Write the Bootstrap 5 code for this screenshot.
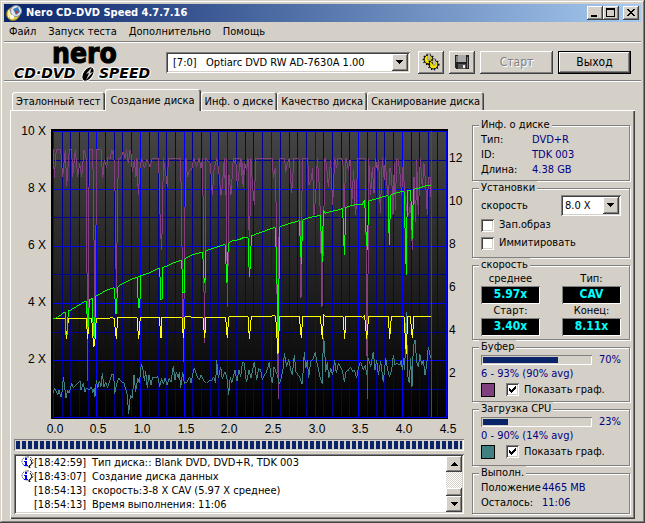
<!DOCTYPE html>
<html lang="ru">
<head>
<meta charset="utf-8">
<meta name="viewport" content="width=device-width, initial-scale=1">
<title>Nero CD-DVD Speed 4.7.7.16</title>
<link href="https://cdn.jsdelivr.net/npm/bootstrap@5.3.0/dist/css/bootstrap.min.css" rel="stylesheet">
<style>
:root{--face:#d4d0c8;--shade:#808080;--dark:#404040;--navy:#0a246a}
body{font:11px/14px "DejaVu Sans Condensed","DejaVu Sans",sans-serif;color:#000;background:var(--face)}
.window{min-height:100vh;padding:4px;background:var(--face);box-shadow:inset -1px -1px var(--dark),inset 1px 1px var(--face),inset -2px -2px var(--shade),inset 2px 2px #fff}
.titlebar{height:18px;padding:0 2px;background:linear-gradient(90deg,#0a246a,#a6caf0);color:#fff}
.caption{font-weight:700;line-height:18px}
.raised{background:var(--face);border:0;border-radius:0;color:#000;box-shadow:inset -1px -1px var(--dark),inset 1px 1px #fff,inset -2px -2px var(--shade)}
.sunken{border:0;border-radius:0;box-shadow:inset 1px 1px var(--shade),inset -1px -1px #fff,inset 2px 2px var(--dark),inset -2px -2px var(--face)}
.thin-well{box-shadow:inset 1px 1px var(--shade),inset -1px -1px #fff}
.capbtn{width:16px;height:14px;padding:0}
.capbtn svg,.toolbtn svg{display:block;margin:auto}
.menubar{height:20px;padding:0 5px;gap:12px;border-bottom:1px solid var(--shade);box-shadow:0 1px #fff}
.menubar a{color:#000;text-decoration:none;line-height:20px}
.toolbar{height:39px;padding:2px 10px 0 9px;gap:5px;border-bottom:1px solid var(--shade);box-shadow:0 1px #fff}
.logo{width:146px;height:37px;flex:none;overflow:visible}
.pick{appearance:none;height:21px;padding:0 20px 0 7px;color:#000;font-size:11px;line-height:15px;background:#fff url("data:image/svg+xml,%3Csvg xmlns='http://www.w3.org/2000/svg' width='18' height='17' shape-rendering='crispEdges'%3E%3Cpath fill='%23404040' d='M0 0h16v17H0z'/%3E%3Cpath fill='%23fff' d='M0 0h15v16H0z'/%3E%3Cpath fill='%23808080' d='M1 1h14v15H1z'/%3E%3Cpath fill='%23d4d0c8' d='M1 1h13v14H1z'/%3E%3Cpath d='M4 6h7v1H4zM5 7h5v1H5zM6 8h3v1H6zM7 9h1v1H7z'/%3E%3C/svg%3E") no-repeat right center}
.drive{margin:0 3px 0 2px}
.speed{width:60px;padding-left:4px}
.toolbtn{width:26px;height:23px;padding:0;flex:none}
.wide{width:73px;height:23px;padding:0;flex:none;font-size:12px}
.wide:disabled{color:var(--shade);text-shadow:1px 1px #fff;opacity:1}
.primary-frame{border:1px solid #000}
.sheet{margin:8px 6px 0}
.nav-tabs{border:0;padding-left:2px}
.nav-tabs .nav-link{border:0;border-radius:3px 3px 0 0;margin:0;padding:2px 4px 1px;height:18px;line-height:15px;white-space:nowrap;color:#000;background:var(--face);box-shadow:inset 1px 1px #fff,inset -1px 0 var(--dark),inset -2px 0 var(--shade)}
.nav-tabs .nav-link:hover{color:#000}
.nav-tabs .nav-link.active{color:#000;height:22px;margin-bottom:-1px;padding:3px 6px;background:var(--face);position:relative}
.panel{padding:8px 5px 4px 4px;gap:8px;box-shadow:inset 1px 1px #fff,inset -1px -1px var(--dark),inset -2px -2px var(--shade)}
.chart{display:block;width:100%;height:auto}
.steps{height:12px;padding:2px;border-radius:0;background:var(--face)}
.steps .progress-bar{background:repeating-linear-gradient(90deg,var(--navy) 0 4px,var(--face) 4px 6px)}
.log{margin-top:3px;padding:2px;background:#fff}
.log li{height:14px;white-space:nowrap;padding-left:4px}
.log li svg{width:14px;height:13px;flex:none}
.log time{width:58px;flex:none}
.track{width:16px;background:repeating-conic-gradient(#fff 0 25%,var(--face) 0 50%) 0 0/2px 2px}
.arrow{width:16px;height:16px;padding:0}
.arrow svg{display:block;margin:auto}
.thumb{height:8px}
.side{width:158px;flex:none}
.group{min-width:0;padding:0 8px 3px;border:1px solid var(--shade);box-shadow:1px 1px #fff,inset 1px 1px #fff}
.group legend{float:none;width:auto;margin:0 0 0 -2px;padding:0 2px;font-size:11px;line-height:14px;background:var(--face)}
.roomy{padding-bottom:5px}
.fact dt,.fact dd{margin:0;font-weight:400;line-height:15px}
.fact dt{width:51px}
.fact.wider dt{width:61px}
.navytext,.fact dd{color:#000080}
.tick{appearance:none;width:13px;height:13px;margin:0 5px 0 0;background:#fff;flex:none}
.tick:checked{background:#fff url("data:image/svg+xml,%3Csvg xmlns='http://www.w3.org/2000/svg' width='13' height='13' shape-rendering='crispEdges'%3E%3Cpath d='M3 5h1v3H3zM4 6h1v3H4zM5 7h1v3H5zM6 6h1v3H6zM7 5h1v3H7zM8 4h1v3H8zM9 3h1v3H9z'/%3E%3C/svg%3E")}
.opt{height:18px}
.readout{display:block;width:59px;height:18px;line-height:16px;background:#000;color:#0ff;font-size:12px;font-weight:700;text-align:center}
.meter{width:111px;height:10px;padding:2px;border-radius:0;background:var(--face)}
.meter .progress-bar{background:var(--navy)}
.line12{height:12px}
.line15{line-height:15px}
.line17{height:17px}
.swatch{width:14px;height:14px;border:1px solid #000;margin-right:11px}
.buf{background:#804080}.cpu{background:#408080}
</style>
<script src="https://cdn.jsdelivr.net/npm/bootstrap@5.3.0/dist/js/bootstrap.bundle.min.js"></script>
</head>
<body>
<div class="window d-flex flex-column">
  <header class="titlebar d-flex align-items-center">
    <svg class="flex-shrink-0" width="16" height="16" viewBox="0 0 16 16"><circle cx="7" cy="9" r="6.500" fill="#e6c84c" stroke="#94761a"/><path d="M2 5l5 4-5 4z" fill="#fff3a0"/><circle cx="10" cy="6" r="5.500" fill="#dfe7ef" stroke="#8592a5"/><path d="M7 4l5-2 2 5-4 3z" fill="#3b78b8"/><path d="M9 5l3 2-2 2z" fill="#d03024"/><circle cx="6" cy="12" r="2" fill="#fff"/></svg>
    <span class="caption ms-1 flex-grow-1">Nero CD-DVD Speed 4.7.7.16</span>
    <button class="btn raised capbtn" aria-label="Свернуть"><svg width="16" height="14" shape-rendering="crispEdges"><path d="M4 9h6v2H4z"/></svg></button>
    <button class="btn raised capbtn" aria-label="Развернуть"><svg width="16" height="14" shape-rendering="crispEdges"><path d="M3 2h9v9H3zM4 4v6h7V4z" fill-rule="evenodd"/></svg></button>
    <button class="btn raised capbtn ms-1" aria-label="Закрыть"><svg width="16" height="14" shape-rendering="crispEdges"><path d="M4 3h2v1h1v1h2V4h1V3h2v1h-1v1h-1v1H9v1h1v1h1v1h1v1h-2V9H9V8H7v1H6v1H4V9h1V8h1V7h1V6H6V5H5V4H4z"/></svg></button>
  </header>
  <nav class="menubar d-flex">
    <a href="#">Файл</a><a href="#">Запуск теста</a><a href="#">Дополнительно</a><a href="#">Помощь</a>
  </nav>
  <div class="toolbar d-flex align-items-center">
    <svg class="logo" viewBox="0 0 146 37" role="img" aria-label="nero CD-DVD SPEED">
      <text x="39" y="19" font-size="28" font-weight="700" stroke="#000">nero</text>
      <g stroke="#fff" stroke-width="2" paint-order="stroke" font-weight="700" font-family="'DejaVu Sans',sans-serif" font-size="14" font-style="italic">
        <text x="1" y="34">CD·DVD</text>
        <text x="86" y="34">SPEED</text>
      </g>
      <ellipse cx="75" cy="30" rx="5" ry="8" transform="rotate(35 75 30)" stroke="#fff"/>
      <path d="M73 36l3-7-3 1 6-7-2 6 3-1z" fill="#d4d0c8"/>
    </svg>
    <select class="pick drive sunken flex-grow-1" aria-label="Привод"><option>[7:0]&nbsp;&nbsp; Optiarc DVD RW AD-7630A 1.00</option></select>
    <button class="btn raised toolbtn" aria-label="Параметры"><svg width="18" height="18" viewBox="0 0 18 18"><g fill="#f0e000" stroke="#000"><circle cx="6.500" cy="6.500" r="4.500"/><circle cx="11.500" cy="11.500" r="4.500"/></g><g fill="none" stroke="#000" stroke-width="2" stroke-dasharray="1 2"><circle cx="6.500" cy="6.500" r="5"/><circle cx="11.500" cy="11.500" r="5"/></g><path d="M6 1h2v6H6zM11 6h2v6h-2z" fill="#ddd" stroke="#555" stroke-width=".5"/></svg></button>
    <button class="btn raised toolbtn" aria-label="Сохранить"><svg width="14" height="14" viewBox="0 0 14 14" shape-rendering="crispEdges"><path d="M0 0h14v14H1L0 13z" fill="#222"/><path d="M1 1h2v6H1zM12 2h1v11h-1z" fill="#808080"/><path d="M3 0h8v7H3z" fill="#aaa"/><path d="M3 9h8v5H3z" fill="#555"/><path d="M8 10h2v3H8z" fill="#eee"/></svg></button>
    <button class="btn raised wide" disabled>Старт</button>
    <button class="btn raised wide primary-frame">Выход</button>
  </div>

  <div class="sheet flex-grow-1 d-flex flex-column">
    <div class="nav nav-tabs flex-nowrap align-items-end" role="tablist">
      <button class="nav-link" role="tab">Эталонный тест</button>
      <button class="nav-link active" role="tab" aria-selected="true">Создание диска</button>
      <button class="nav-link" role="tab">Инф. о диске</button>
      <button class="nav-link" role="tab">Качество диска</button>
      <button class="nav-link" role="tab">Сканирование диска</button>
    </div>
    <div class="panel flex-grow-1 d-flex">
      <main class="flex-grow-1">
        <svg class="chart" viewBox="14 118 450 321" role="img" aria-label="График скорости записи">
          <defs>
            <linearGradient id="bg" x1="0" y1="0" x2="0" y2="1"><stop offset="0" stop-color="#444"/><stop offset="1" stop-color="#000"/></linearGradient>
          </defs>
          <g shape-rendering="crispEdges">
            <rect x="51" y="129" width="397" height="290" fill="#000"/>
            <rect x="53" y="131" width="394" height="287" fill="url(#bg)"/>
            <path stroke="#000090" fill="none" d="M62.500 131v286M70.500 131v286M79.500 131v286M88.500 131v286M105.500 131v286M114.500 131v286M122.500 131v286M131.500 131v286M149.500 131v286M158.500 131v286M166.500 131v286M175.500 131v286M192.500 131v286M201.500 131v286M210.500 131v286M218.500 131v286M236.500 131v286M245.500 131v286M253.500 131v286M262.500 131v286M280.500 131v286M289.500 131v286M297.500 131v286M306.500 131v286M323.500 131v286M332.500 131v286M341.500 131v286M349.500 131v286M367.500 131v286M376.500 131v286M384.500 131v286M393.500 131v286M411.500 131v286M419.500 131v286M428.500 131v286M437.500 131v286M53 160.500h394M53 217.500h394M53 274.500h394M53 332.500h394M53 389.500h394"/>
            <path stroke="#00f" fill="none" d="M53.500 131v287M96.500 131v287M140.500 131v287M184.500 131v287M227.500 131v287M271.500 131v287M315.500 131v287M358.500 131v287M402.500 131v287M446.500 131v287M53 131.500h394M53 189.500h394M53 246.500h394M53 303.500h394M53 360.500h394M53 417.500h394"/>
            <g fill="none" stroke-width="3">
              <g transform="translate(15 120) scale(.3333)">
                <polyline stroke="#804080" points="115,88 118,175 122,105 125,88 137,88 143,170 148,120 151,90 155,198 163,88 170,88 173,170 181,90 188,170 194,130 200,170 207,90 213,110 216,450 218,783 221,260 224,88 233,88 236,260 240,640 243,320 245,88 258,88 263,175 268,120 272,130 275,145 279,110 285,118 290,90 293,103 296,90 300,210 304,520 307,300 310,115 317,115 325,95 330,115 335,90 340,130 345,90 348,100 352,155 358,120 363,170 366,115 370,225 375,145 380,115 388,145 395,118 405,140 412,115 431,115 436,320 440,390 443,260 445,115 452,160 457,200 460,115 497,115 502,440 505,725 510,265 513,115 517,170 525,150 530,150 536,115 545,140 552,115 558,145 563,115 566,430 569,670 573,115 586,130 592,225 597,150 605,115 611,150 618,225 622,200 628,115 632,225 634,115 637,560 641,330 642,165 648,225 655,115 675,115 685,200 688,130"/>
                <polyline stroke="#0f0" points="350,478 365,472 376,468 400,460 410,455 425,447 434,445 438,540 441,540 443,442 455,438 480,427 500,420 504,518 508,518 510,416 525,408 545,400 563,397 568,490 571,475 573,393 590,386 610,380 630,373 636,490 640,370 650,363 665,360 690,352"/>
              </g>
              <g transform="translate(15 275) scale(.3333)">
                <polyline stroke="#408080" points="115,355 118,338 124,350 128,360 132,345 138,366 142,345 145,305 150,345 153,370 158,345 163,355 170,325 175,340 183,330 188,325 195,318 198,345 205,325 210,350 215,338 222,345 230,335 233,355 238,340 240,365 244,315 248,340 253,318 258,335 262,295 267,335 272,320 278,338 284,318 290,298 296,298 299,358 305,325 312,310 320,320 327,325 333,345 337,360 341,418 346,360 352,370 357,300 362,350 368,310 373,325 379,267 384,285 388,318 392,288 397,338 402,300 408,330 413,305 420,310 428,305 434,335 440,310 445,328 450,308 456,330 463,310 468,320 475,272 480,315 484,290 490,310 493,290 497,340 503,290 508,325 515,322 524,305 528,325 535,290 538,278 545,300 553,315 558,300 565,315 575,325 585,315 590,318 596,305 602,325 605,254 610,310 617,275 622,312 630,290 637,315 641,360 646,305 650,325 655,305 660,285 666,318 672,285 677,305 682,265 686,260 690,275"/>
                <polyline stroke="#ff0" points="115,132 150,132 155,192 160,132 175,132 178,129 182,132 190,130 214,130 218,192 222,130 230,130 236,216 239,210 244,130 285,130 291,126 297,130 304,192 308,127 366,127 371,193 376,127 433,127 438,190 441,127 501,127 505,190 510,125 525,124 530,127 564,127 569,190 573,127 632,127 637,190 641,125 690,124"/>
                <polyline stroke="#0f0" points="115,131 122,131 128,125 135,122 142,115 150,111 153,180 156,180 160,108 168,105 180,97 195,88 210,80 215,78 217,155 220,155 223,75 232,69 235,175 239,190 241,65 250,60 270,48 285,42 298,38 303,118 308,35 325,25 345,15 360,9 367,5 370,98 374,98 378,3 384,2"/>
              </g>
              <g transform="translate(240 120) scale(.3333)">
                <polyline stroke="#804080" points="-17,130 -13,115 -8,200 0,130 3,115 5,150 8,130 10,200 14,130 20,150 24,115 27,330 29,350 33,115 37,190 43,255 47,115 97,115 100,175 104,150 107,145 110,440 115,837 118,115 134,115 137,155 142,130 148,115 155,220 162,115 177,115 180,300 183,535 187,115 203,115 207,195 213,180 218,145 222,285 227,230 232,115 238,200 241,285 246,560 250,360 255,115 260,140 265,200 272,120 278,255 284,115 290,145 293,115 305,115 310,145 312,265 318,115 325,150 330,120 335,255 341,150 346,285 350,250 352,115 376,115 380,560 382,837 386,115 392,225 397,140 402,220 406,115 412,150 416,120 421,280 427,115 433,180 436,115 440,190 445,230 450,145 455,165 459,285 463,130 466,270 470,115 475,120 480,160 485,225 490,120 493,210 500,270 506,285 512,250 517,390 522,170 527,305 530,120 535,285 541,115 547,205 552,130 557,190 562,285 565,172 572,172 572,230"/>
                <polyline stroke="#0f0" points="0,358 10,352 24,352 28,470 31,435 34,348 60,338 85,329 95,325 102,323 106,323 110,435 114,650 118,420 120,320 150,310 178,302 184,433 188,299 210,292 241,286 247,425 250,270 255,280 262,277 285,272 308,266 313,405 318,262 345,254 360,252 366,256 370,245 374,240 378,335 382,390 386,243 405,238 430,230 444,227 448,375 452,225 470,218 492,213 499,465 502,211 512,211 517,358 520,208 540,203 560,197 572,195"/>
              </g>
              <g transform="translate(240 275) scale(.3333)">
                <polyline stroke="#408080" points="12,275 14,270 16,300 20,322 27,285 33,310 38,285 43,260 50,315 56,280 62,285 67,315 73,300 80,290 88,260 92,300 97,325 102,275 106,285 112,300 118,328 124,310 130,275 133,235 140,275 146,252 152,285 157,300 163,240 168,290 175,300 180,310 187,328 193,232 197,280 202,255 206,310 212,260 220,250 226,230 230,260 235,280 240,305 247,328 250,190 253,200 257,290 262,260 266,310 272,280 278,300 284,255 289,295 295,265 302,275 308,290 313,320 318,290 326,285 332,275 338,290 343,285 350,310 356,275 362,260 370,285 376,270 380,300 385,250 392,275 400,230 405,285 410,255 415,300 422,258 430,322 437,250 442,280 448,305 455,285 460,240 465,270 472,265 480,270 484,255 487,285 492,250 494,285 499,112 503,300 508,325 512,250 516,335 520,215 525,195 530,260 535,275 540,238 545,270 550,255 555,300 560,270 565,215 572,250"/>
                <polyline stroke="#ff0" points="0,124 24,124 28,192 34,124 94,124 102,121 107,124 114,236 119,124 178,124 184,190 188,124 241,124 247,192 251,118 256,124 309,124 314,192 318,124 360,124 368,127 374,121 380,192 386,124 445,124 449,192 454,124 492,124 499,236 503,124 511,124 517,190 522,124 572,124"/>
              </g>
            </g>
            <rect x="431" y="131" width="1" height="286" fill="#f00"/>
          </g>
          <g font-size="12" font-family="'Liberation Sans',Arial,sans-serif">
            <g text-anchor="end"><text x="46" y="135">10 X</text><text x="46" y="192">8 X</text><text x="46" y="249">6 X</text><text x="46" y="306">4 X</text><text x="46" y="363">2 X</text></g>
            <text x="449" y="162">12</text><text x="449" y="205">10</text><text x="449" y="248">8</text><text x="449" y="291">6</text><text x="449" y="334">4</text><text x="449" y="377">2</text>
            <g text-anchor="middle"><text x="55" y="433">0.0</text><text x="98" y="433">0.5</text><text x="142" y="433">1.0</text><text x="186" y="433">1.5</text><text x="229" y="433">2.0</text><text x="273" y="433">2.5</text><text x="317" y="433">3.0</text><text x="360" y="433">3.5</text><text x="404" y="433">4.0</text><text x="448" y="433">4.5</text></g>
          </g>
        </svg>
        <div class="progress steps thin-well" role="progressbar" aria-label="Выполнение" aria-valuenow="100" aria-valuemin="0" aria-valuemax="100"><div class="progress-bar w-100"></div></div>
        <div class="log sunken d-flex">
          <ul class="list-unstyled m-0 flex-grow-1">
            <li class="d-flex"><svg viewBox="0 0 14 13"><path d="M7 1a5 4.500 0 0 1 2 9l1 2-3-2A5 4.500 0 0 1 7 1z" fill="#fff" stroke="#555" stroke-dasharray="2 1"/><path d="M10 3q4 4-1 7l1 2" fill="none" stroke="#000"/><path d="M5 2h2v2H5zM4 5h3v4h1v1H4V9h1V6H4z" fill="#00f"/></svg><time>[18:42:59]</time><span>Тип диска:: Blank DVD, DVD+R, TDK 003</span></li>
            <li class="d-flex"><svg viewBox="0 0 14 13"><path d="M7 1a5 4.500 0 0 1 2 9l1 2-3-2A5 4.500 0 0 1 7 1z" fill="#fff" stroke="#555" stroke-dasharray="2 1"/><path d="M10 3q4 4-1 7l1 2" fill="none" stroke="#000"/><path d="M5 2h2v2H5zM4 5h3v4h1v1H4V9h1V6H4z" fill="#00f"/></svg><time>[18:43:07]</time><span>Создание диска данных</span></li>
            <li class="d-flex"><svg></svg><time>[18:54:13]</time><span>скорость:3-8 X CAV (5.97 X среднее)</span></li>
            <li class="d-flex"><svg></svg><time>[18:54:13]</time><span>Время выполнения: 11:06</span></li>
          </ul>
          <div class="track d-flex flex-column">
            <button class="btn raised arrow" aria-label="Вверх"><svg width="7" height="4" shape-rendering="crispEdges"><path d="M3 0h1v1H3zM2 1h3v1H2zM1 2h5v1H1zM0 3h7v1H0z"/></svg></button>
            <div class="thumb raised mt-auto"></div>
            <button class="btn raised arrow" aria-label="Вниз"><svg width="7" height="4" shape-rendering="crispEdges"><path d="M0 0h7v1H0zM1 1h5v1H1zM2 2h3v1H2zM3 3h1v1H3z"/></svg></button>
          </div>
        </div>
      </main>

      <aside class="side">
        <fieldset class="group"><legend>Инф. о диске</legend>
          <dl class="fact m-0">
            <div class="d-flex"><dt>Тип:</dt><dd>DVD+R</dd></div>
            <div class="d-flex"><dt>ID:</dt><dd>TDK 003</dd></div>
            <div class="d-flex"><dt>Длина:</dt><dd>4.38 GB</dd></div>
          </dl>
        </fieldset>
        <fieldset class="group roomy"><legend>Установки</legend>
          <div class="d-flex justify-content-between align-items-center"><label for="spd">скорость</label><select id="spd" class="pick speed sunken"><option>8.0 X</option></select></div>
          <div class="opt d-flex align-items-center"><input type="checkbox" class="tick sunken" id="o1"><label for="o1">Зап.образ</label></div>
          <div class="opt d-flex align-items-center"><input type="checkbox" class="tick sunken" id="o2"><label for="o2">Иммитировать</label></div>
        </fieldset>
        <fieldset class="group"><legend>скорость</legend>
          <div class="d-flex justify-content-between text-center">
            <div><div>среднее</div><output class="readout thin-well">5.97x</output><div>Старт:</div><output class="readout thin-well">3.40x</output></div>
            <div><div>Тип:</div><output class="readout thin-well">CAV</output><div>Конец:</div><output class="readout thin-well">8.11x</output></div>
          </div>
        </fieldset>
        <fieldset class="group"><legend>Буфер</legend>
          <div class="line12 d-flex align-items-center justify-content-between"><div class="progress meter thin-well" role="progressbar" aria-label="Буфер" aria-valuenow="70"><div class="progress-bar" style="width:70%"></div></div><span class="navytext">70%</span></div>
          <div class="navytext line15">6 - 93% (90% avg)</div>
          <div class="line17 d-flex align-items-center"><span class="swatch buf"></span><input type="checkbox" class="tick sunken" id="g1" checked><label for="g1">Показать граф.</label></div>
        </fieldset>
        <fieldset class="group roomy"><legend>Загрузка CPU</legend>
          <div class="line12 d-flex align-items-center justify-content-between"><div class="progress meter thin-well" role="progressbar" aria-label="Загрузка CPU" aria-valuenow="23"><div class="progress-bar" style="width:23%"></div></div><span class="navytext">23%</span></div>
          <div class="navytext line15">0 - 90% (14% avg)</div>
          <div class="line17 d-flex align-items-center"><span class="swatch cpu"></span><input type="checkbox" class="tick sunken" id="g2" checked><label for="g2">Показать граф.</label></div>
        </fieldset>
        <fieldset class="group"><legend>Выполн.</legend>
          <dl class="fact wider m-0">
            <div class="d-flex"><dt>Положение</dt><dd>4465 MB</dd></div>
            <div class="d-flex"><dt>Осталось:</dt><dd>11:06</dd></div>
          </dl>
        </fieldset>
      </aside>
    </div>
  </div>
</div>
</body>
</html>
